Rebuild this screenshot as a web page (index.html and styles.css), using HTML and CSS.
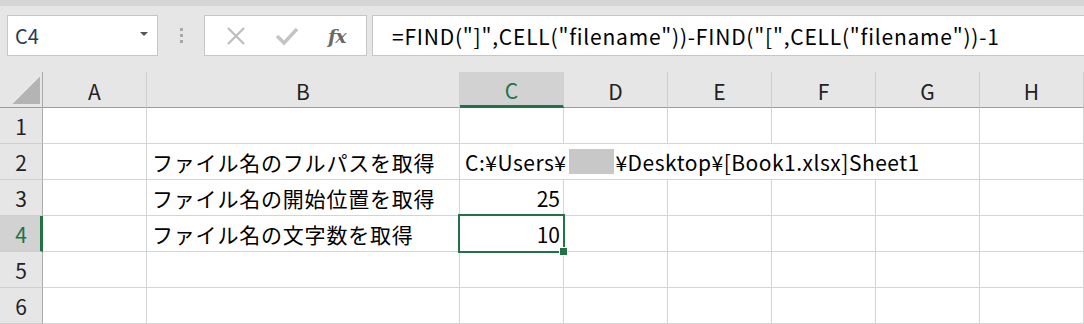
FILE: index.html
```html
<!DOCTYPE html>
<html lang="ja">
<head>
    <meta charset="UTF-8">
    <title>Book1.xlsx - Sheet1</title>
    <link rel="stylesheet" href="styles.css">
</head>
<body>
    <div class="topbar">
        <div class="name-box">
            <span>C4</span>
            <span class="drop"></span>
        </div>
        <div class="grip"><i></i><i></i><i></i></div>
        <div class="fx-box">
            <svg class="ico" width="24" height="24" viewBox="0 0 24 24">
                <path d="M4 4 L20 20 M20 4 L4 20" stroke="#bdbdbd" stroke-width="2.2" fill="none"/>
            </svg>
            <svg class="ico" width="26" height="24" viewBox="0 0 26 24">
                <path d="M3 12 L10 19 L23 5" stroke="#c4c4c4" stroke-width="3.4" fill="none"/>
            </svg>
            <span class="fx">fx</span>
        </div>
        <div class="formula">=FIND("]",CELL("filename"))-FIND("[",CELL("filename"))-1</div>
    </div>

    <div class="sheet">
        <div class="corner"><span class="tri"></span></div>
        <div class="col-head">A</div>
        <div class="col-head">B</div>
        <div class="col-head active">C</div>
        <div class="col-head">D</div>
        <div class="col-head">E</div>
        <div class="col-head">F</div>
        <div class="col-head">G</div>
        <div class="col-head">H</div>

        <div class="row-head">1</div>
        <div class="cell"></div><div class="cell"></div><div class="cell"></div><div class="cell"></div>
        <div class="cell"></div><div class="cell"></div><div class="cell"></div><div class="cell"></div>

        <div class="row-head">2</div>
        <div class="cell"></div>
        <div class="cell jp">ファイル名のフルパスを取得</div>
        <div class="cell wide">C:¥Users¥<span class="hidden-name"></span>¥Desktop¥[Book1.xlsx]Sheet1</div>
        <div class="cell"></div>

        <div class="row-head">3</div>
        <div class="cell"></div>
        <div class="cell jp">ファイル名の開始位置を取得</div>
        <div class="cell num">25</div>
        <div class="cell"></div><div class="cell"></div><div class="cell"></div><div class="cell"></div><div class="cell"></div>

        <div class="row-head active">4</div>
        <div class="cell"></div>
        <div class="cell jp">ファイル名の文字数を取得</div>
        <div class="cell num selected">10</div>
        <div class="cell"></div><div class="cell"></div><div class="cell"></div><div class="cell"></div><div class="cell"></div>

        <div class="row-head">5</div>
        <div class="cell"></div><div class="cell"></div><div class="cell"></div><div class="cell"></div>
        <div class="cell"></div><div class="cell"></div><div class="cell"></div><div class="cell"></div>

        <div class="row-head">6</div>
        <div class="cell"></div><div class="cell"></div><div class="cell"></div><div class="cell"></div>
        <div class="cell"></div><div class="cell"></div><div class="cell"></div><div class="cell"></div>
    </div>
</body>
</html>
```

FILE: styles.css
```css
* {
    box-sizing: border-box;
}

body {
    margin: 0;
    background: #e6e6e6;
    font-family: "Noto Sans CJK JP", "Noto Sans", sans-serif;
    color: #000;
    overflow: hidden;
}

/* formula bar */
.topbar {
    height: 72px;
    border-top: 6px solid #d5d5d5;
    display: flex;
    align-items: flex-start;
    padding: 9px 0 0 7px;
    white-space: nowrap;
}

.name-box {
    width: 151px;
    height: 41px;
    background: #fff;
    border: 1px solid #c6c6c6;
    display: flex;
    align-items: center;
    justify-content: space-between;
    padding: 0 9px 0 7px;
    font-size: 20px;
    color: #2b3a55;
}

.drop {
    width: 0;
    height: 0;
    border-left: 4px solid transparent;
    border-right: 4px solid transparent;
    border-top: 4px solid #555;
    margin-top: -4px;
}

.grip {
    width: 46px;
    height: 41px;
    display: flex;
    flex-direction: column;
    align-items: center;
    justify-content: center;
    gap: 3px;
}

.grip i {
    width: 3px;
    height: 3px;
    background: #a8a8a8;
}

.fx-box {
    width: 163px;
    height: 41px;
    background: #fff;
    border: 1px solid #c6c6c6;
    display: flex;
    align-items: center;
    padding-left: 19px;
    gap: 26px;
}

.fx {
    font-family: "DejaVu Serif", "Liberation Serif", serif;
    font-style: italic;
    font-weight: bold;
    font-size: 19px;
    color: #6a6a6a;
    margin-left: 2px;
    letter-spacing: -1px;
}

.formula {
    flex: 1;
    height: 41px;
    margin-left: 5px;
    background: #fff;
    border: 1px solid #c6c6c6;
    border-right: none;
    padding-left: 19px;
    display: flex;
    align-items: center;
    font-size: 21px;
    letter-spacing: 0.78px;
}

/* sheet grid */
.sheet {
    display: grid;
    grid-template-columns: 43px 104px 313px repeat(6, 104px);
    grid-auto-rows: 36px;
    background: #fff;
}

.corner,
.col-head,
.row-head {
    background: #e6e6e6;
    color: #222;
    font-size: 21px;
    display: flex;
    align-items: center;
    justify-content: center;
}

.corner {
    border-right: 1px solid #ababab;
    border-bottom: 1px solid #9c9c9c;
    align-items: flex-end;
    justify-content: flex-end;
    padding: 0 2px 3px 0;
}

.tri {
    width: 28px;
    height: 28px;
    background: linear-gradient(to bottom right, transparent 50%, #b4b4b4 50%);
}

.col-head {
    border-right: 1px solid #cfcfcf;
    border-bottom: 1px solid #9c9c9c;
    padding-top: 2px;
}

.col-head.active {
    background: #d2d2d2;
    color: #217346;
    border-bottom: 3px solid #217346;
}

.row-head {
    border-right: 1px solid #ababab;
    border-bottom: 1px solid #cfcfcf;
}

.row-head.active {
    background: #d2d2d2;
    color: #217346;
    border-right: 3px solid #217346;
    padding-left: 2px;
}

.cell {
    border-right: 1px solid #d4d4d4;
    border-bottom: 1px solid #d4d4d4;
    display: flex;
    align-items: center;
    padding: 0 5px;
    font-size: 21px;
    white-space: nowrap;
    overflow: visible;
}

.cell.jp {
    letter-spacing: 0.8px;
}

.cell.wide {
    grid-column: span 5;
    letter-spacing: 0.5px;
}

.cell.num {
    justify-content: flex-end;
    padding-right: 3px;
}

.hidden-name {
    display: inline-block;
    width: 45px;
    height: 25px;
    background: #c8c8c8;
    margin: 0 1px 0 3px;
}

.selected {
    position: relative;
}

.selected::after {
    content: "";
    position: absolute;
    left: -2px;
    top: -2px;
    right: -2px;
    bottom: -2px;
    border: 2px solid #217346;
}

.selected::before {
    content: "";
    position: absolute;
    right: -5px;
    bottom: -5px;
    width: 7px;
    height: 7px;
    background: #217346;
    border: 1px solid #fff;
    z-index: 1;
}
```
